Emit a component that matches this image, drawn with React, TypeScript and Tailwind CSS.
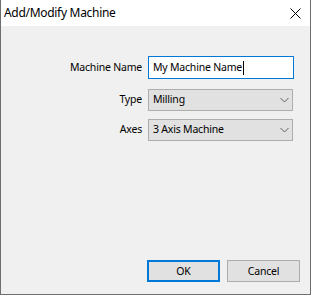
import React from 'react';

const Chevron: React.FC = () => (
  <svg width="9" height="5" viewBox="0 0 9 5" className="absolute right-[3px] top-1/2 -translate-y-1/2">
    <path d="M0.5 0.5 L4.5 4.5 L8.5 0.5" fill="none" stroke="#606060" strokeWidth="1" />
  </svg>
);

const Select: React.FC<{ value: string }> = ({ value }) => (
  <div className="relative h-[22px] w-[145px] bg-[#e1e1e1] border border-[#adadad] flex items-center pl-[4px]">
    {value}
    <Chevron />
  </div>
);

const App: React.FC = () => {
  return (
    <div
      className="w-[311px] h-[295px] flex flex-col bg-[#f0f0f0] border-x border-b border-[#6e6e6e] text-[10.5px] tracking-[-0.2px] text-black overflow-hidden"
      style={{ fontFamily: '"Noto Sans", "Open Sans", Arial, sans-serif' }}
    >
      <div className="h-[26px] bg-white flex items-center justify-between pl-[3px] pr-[9px]">
        <span className="text-[12px] tracking-[-0.3px] leading-none">Add/Modify Machine</span>
        <svg width="11" height="11" viewBox="0 0 11 11">
          <path d="M0.5 0.5 L10.5 10.5 M10.5 0.5 L0.5 10.5" stroke="#000" strokeWidth="1" />
        </svg>
      </div>

      <div className="flex-1 flex flex-col">
        <div className="mt-[30px] flex flex-col">
          <div className="flex items-center">
            <span className="w-[147px] pr-[6px] text-right">Machine Name</span>
            <div className="h-[23px] w-[146px] bg-white border border-[#0078d7] flex items-center pl-[4px]">
              My Machine Name<span className="inline-block w-px h-[14px] bg-black ml-px" />
            </div>
          </div>
          <div className="flex items-center mt-[10px]">
            <span className="w-[147px] pr-[6px] text-right">Type</span>
            <Select value="Milling" />
          </div>
          <div className="flex items-center mt-[8px]">
            <span className="w-[147px] pr-[6px] text-right">Axes</span>
            <Select value="3 Axis Machine" />
          </div>
        </div>

        <div className="mt-auto mb-[12px] mr-[10px] flex justify-end gap-[7px]">
          <button className="w-[73px] h-[22px] bg-[#e1e1e1] border-2 border-[#0078d7] leading-none">OK</button>
          <button className="w-[73px] h-[22px] bg-[#e1e1e1] border border-[#adadad] leading-none">Cancel</button>
        </div>
      </div>
    </div>
  );
};

export default App;
